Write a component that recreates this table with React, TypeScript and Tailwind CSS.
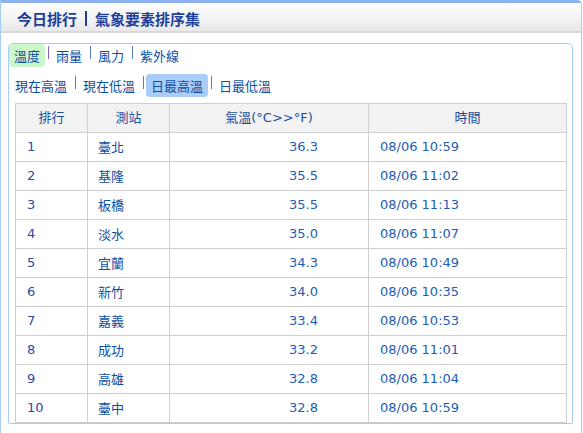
const rows = [
  { rank: 1, station: '臺北', temp: '36.3', time: '08/06 10:59' },
  { rank: 2, station: '基隆', temp: '35.5', time: '08/06 11:02' },
  { rank: 3, station: '板橋', temp: '35.5', time: '08/06 11:13' },
  { rank: 4, station: '淡水', temp: '35.0', time: '08/06 11:07' },
  { rank: 5, station: '宜蘭', temp: '34.3', time: '08/06 10:49' },
  { rank: 6, station: '新竹', temp: '34.0', time: '08/06 10:35' },
  { rank: 7, station: '嘉義', temp: '33.4', time: '08/06 10:53' },
  { rank: 8, station: '成功', temp: '33.2', time: '08/06 11:01' },
  { rank: 9, station: '高雄', temp: '32.8', time: '08/06 11:04' },
  { rank: 10, station: '臺中', temp: '32.8', time: '08/06 10:59' },
]

const elements = ['溫度', '雨量', '風力', '紫外線']
const kinds = ['現在高溫', '現在低溫', '日最高溫', '日最低溫']

function Sep({ first }: { first?: boolean }) {
  return <span className={`inline-block w-px h-[13px] ml-[3px] mr-[2px] -mt-[6px] ${first ? 'bg-[#8a5cc0]' : 'bg-[#5b7fc4]'}`} />
}

const cjk = { fontFamily: '"Noto Sans CJK TC", sans-serif' }

export default function App() {
  return (
    <div
      className="w-[582px] bg-white border-x-[1.5px] border-t-[3px] border-x-[#a6cdf2] border-t-[#8eb1f1] rounded-tr-[5px] pb-[20px]"
      style={{ fontFamily: '"DejaVu Sans", "Noto Sans CJK TC", sans-serif' }}
    >
      {/* 標題 */}
      <div className="h-[30px] bg-gradient-to-b from-white to-[#e9e9e9] border-b-2 border-[#d8d8d8] flex items-center pl-[16px]">
        <h1 className="flex items-center text-[15px] leading-[15px] font-bold text-[#1d3f99] mt-[2px]" style={cjk}>
          <span>今日排行</span>
          <span className="inline-block w-[2px] h-[15px] bg-[#1d3f99] mx-[8px]" />
          <span>氣象要素排序集</span>
        </h1>
      </div>

      <div className="pt-[10px] pl-[7px] pr-[8px]">
        <div className="border border-[#a6cdf2] rounded-t-[5px] rounded-b-[2px]">
          {/* 要素 */}
          <div className="flex items-center h-[23px] text-[13px] leading-[23px] text-[#0d4fa3]" style={cjk}>
            {elements.map((e, i) => (
              <span key={e} className="flex items-center">
                {i > 0 && <Sep first={i === 1} />}
                <span className={`px-[5px] rounded-[4px] ${i === 0 ? 'bg-[#cdf7cb]' : ''}`}>{e}</span>
              </span>
            ))}
          </div>

          {/* 類別 */}
          <div className="flex items-center h-[23px] mt-[7px] pl-[1px] text-[13px] leading-[23px] text-[#0d4fa3]" style={cjk}>
            {kinds.map((k, i) => (
              <span key={k} className="flex items-center">
                {i > 0 && <Sep first={i === 1} />}
                <span className={`px-[5px] rounded-[4px] ${i === 2 ? 'bg-[#a9cdf8]' : ''}`}>{k}</span>
              </span>
            ))}
          </div>

          <div className="pt-[6px] pl-[6px] pr-[5px]">
            <table className="w-[551px] border-collapse text-[13px] table-fixed">
              <colgroup>
                <col className="w-[72px]" />
                <col className="w-[82px]" />
                <col className="w-[199px]" />
                <col className="w-[198px]" />
              </colgroup>
              <thead>
                <tr className="h-[29px] bg-[#f2f2f2] text-[#1a4f9c]">
                  <th className="border border-[#cfcfcf] font-normal">排行</th>
                  <th className="border border-[#cfcfcf] font-normal">測站</th>
                  <th className="border border-[#cfcfcf] font-normal">氣溫(°C&gt;&gt;°F)</th>
                  <th className="border border-[#cfcfcf] font-normal">時間</th>
                </tr>
              </thead>
              <tbody>
                {rows.map((r) => (
                  <tr key={r.rank} className="h-[29px]">
                    <td className="border border-[#cfcfcf] pl-[11px] text-[#2a4aa8]">{r.rank}</td>
                    <td className="border border-[#cfcfcf] pl-[10px] text-[#0d4fa3]" style={cjk}>{r.station}</td>
                    <td className="border border-[#cfcfcf] text-right pr-[50px] text-[#1d5db3]">{r.temp}</td>
                    <td className="border border-[#cfcfcf] pl-[11px] text-[#1d5db3]">{r.time}</td>
                  </tr>
                ))}
              </tbody>
            </table>
          </div>
        </div>
      </div>
    </div>
  )
}
